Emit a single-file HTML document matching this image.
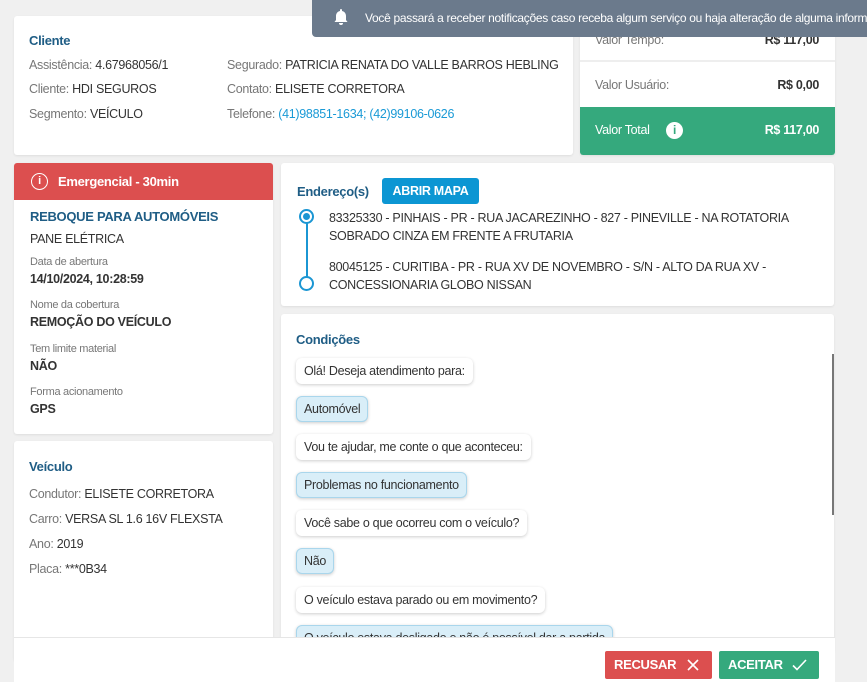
<!DOCTYPE html>
<html><head><meta charset="utf-8"><style>
*{box-sizing:border-box;margin:0;padding:0}
body{width:867px;height:682px;overflow:hidden;background:#f0f0f0;font-family:"Liberation Sans",sans-serif;font-size:12.5px;color:#333;position:relative;letter-spacing:-0.3px}
.card{position:absolute;background:#fff;border-radius:3px;box-shadow:0 1px 2px rgba(0,0,0,.08)}
.t{color:#1f5d85;font-weight:bold;font-size:13px}
.g{color:#777}
.abs{position:absolute;white-space:nowrap}
.b{font-weight:bold}
.bub{position:absolute;left:15px;padding:6px 8px;border-radius:6px;background:#fff;box-shadow:0 1px 3px rgba(0,0,0,.2);white-space:nowrap;font-size:12.5px}
.bub.a{background:#d9eef8;border:1px solid #a9d6ec;padding:5px 7px}
</style></head><body>

<div class="card" style="left:14px;top:16px;width:559px;height:139px">
<div class="abs t" style="left:15px;top:17px">Cliente</div>
<div class="abs" style="left:15px;top:42px"><span class="g">Assistência:</span> 4.67968056/1</div>
<div class="abs" style="left:15px;top:66px"><span class="g">Cliente:</span> HDI SEGUROS</div>
<div class="abs" style="left:15px;top:91px"><span class="g">Segmento:</span> VEÍCULO</div>
<div class="abs" style="left:213px;top:42px"><span class="g">Segurado:</span> PATRICIA RENATA DO VALLE BARROS HEBLING</div>
<div class="abs" style="left:213px;top:66px"><span class="g">Contato:</span> ELISETE CORRETORA</div>
<div class="abs" style="left:213px;top:91px"><span class="g">Telefone:</span> <span style="color:#1a9ad6">(41)98851-1634; (42)99106-0626</span></div>
</div>

<div class="card" style="left:580px;top:10px;width:255px;height:145px;overflow:hidden">
<div class="abs g" style="left:15px;top:23px">Valor Tempo:</div>
<div class="abs b" style="right:16px;top:23px">R$ 117,00</div>
<div style="position:absolute;left:0;right:0;top:50px;height:2px;background:#eee"></div>
<div class="abs g" style="left:15px;top:68px">Valor Usuário:</div>
<div class="abs b" style="right:16px;top:68px">R$ 0,00</div>
<div style="position:absolute;left:0;right:0;top:97px;height:48px;background:#35a97d;color:#fff">
<div class="abs" style="left:15px;top:16px">Valor Total</div>
<div class="abs" style="left:86px;top:15px;width:17px;height:17px;border-radius:50%;background:#fff;color:#35a97d;font-weight:bold;text-align:center;line-height:17px;font-size:12px">i</div>
<div class="abs b" style="right:16px;top:16px">R$ 117,00</div>
</div></div>

<div style="position:absolute;left:312px;top:0;width:555px;height:37px;background:#6b7a8c;border-radius:0 0 0 4px;color:#fff;overflow:hidden">
<svg style="position:absolute;left:22px;top:8px" width="14" height="17" viewBox="0 0 14 17"><path d="M7 1a1 1 0 0 1 1 1v1c2.5.5 4 2.5 4 5v4l1.5 2H.5L2 12V8c0-2.5 1.5-4.5 4-5V2a1 1 0 0 1 1-1z" fill="#fff"/><path d="M5 15h4a2 2 0 0 1-4 0z" fill="#fff"/></svg>
<div class="abs" style="left:53px;top:11px;font-size:12px;letter-spacing:-0.3px">Você passará a receber notificações caso receba algum serviço ou haja alteração de alguma informação</div>
</div>

<div class="card" style="left:14px;top:163px;width:259px;height:271px">
<div style="position:absolute;left:0;top:0;width:259px;height:37px;background:#dc4f4f;border-radius:3px 3px 0 0;color:#fff">
<div class="abs" style="left:17px;top:10px;width:17px;height:17px;border:1.5px solid #fff;border-radius:50%;text-align:center;font-size:11px;line-height:14px;font-weight:bold">i</div>
<div class="abs b" style="left:44px;top:11px;font-size:13px">Emergencial - 30min</div></div>
<div class="abs t" style="left:16px;top:46px;font-size:13px;font-weight:bold">REBOQUE PARA AUTOMÓVEIS</div>
<div class="abs" style="left:16px;top:69px">PANE ELÉTRICA</div>
<div class="abs g" style="left:16px;top:93px;font-size:11px">Data de abertura</div>
<div class="abs b" style="left:16px;top:109px">14/10/2024, 10:28:59</div>
<div class="abs g" style="left:16px;top:136px;font-size:11px">Nome da cobertura</div>
<div class="abs b" style="left:16px;top:152px">REMOÇÃO DO VEÍCULO</div>
<div class="abs g" style="left:16px;top:180px;font-size:11px">Tem limite material</div>
<div class="abs b" style="left:16px;top:196px">NÃO</div>
<div class="abs g" style="left:16px;top:223px;font-size:11px">Forma acionamento</div>
<div class="abs b" style="left:16px;top:239px">GPS</div>
</div>

<div class="card" style="left:14px;top:441px;width:259px;height:220px">
<div class="abs t" style="left:15px;top:18px">Veículo</div>
<div class="abs" style="left:15px;top:46px"><span class="g">Condutor:</span> ELISETE CORRETORA</div>
<div class="abs" style="left:15px;top:71px"><span class="g">Carro:</span> VERSA SL 1.6 16V FLEXSTA</div>
<div class="abs" style="left:15px;top:96px"><span class="g">Ano:</span> 2019</div>
<div class="abs" style="left:15px;top:121px"><span class="g">Placa:</span> ***0B34</div>
</div>

<div class="card" style="left:281px;top:163px;width:553px;height:143px">
<div class="abs t" style="left:16px;top:21px">Endereço(s)</div>
<div class="abs b" style="left:101px;top:15px;width:97px;height:26px;background:#0c96d3;color:#fff;border-radius:3px;text-align:center;line-height:26px;font-size:12.5px">ABRIR MAPA</div>
<div class="abs" style="left:18px;top:46px;width:15px;height:15px;border:2px solid #1b96d3;border-radius:50%"><div style="margin:2px;width:7px;height:7px;border-radius:50%;background:#1b96d3"></div></div>
<div class="abs" style="left:25px;top:60px;width:2px;height:54px;background:#1b96d3"></div>
<div class="abs" style="left:18px;top:113px;width:15px;height:15px;border:2px solid #1b96d3;border-radius:50%;background:#fff"></div>
<div class="abs" style="left:48px;top:46px;line-height:18px">83325330 - PINHAIS - PR - RUA JACAREZINHO - 827 - PINEVILLE - NA ROTATORIA<br>SOBRADO CINZA EM FRENTE A FRUTARIA</div>
<div class="abs" style="left:48px;top:95px;line-height:18px">80045125 - CURITIBA - PR - RUA XV DE NOVEMBRO - S/N - ALTO DA RUA XV -<br>CONCESSIONARIA GLOBO NISSAN</div>
</div>

<div class="card" style="left:281px;top:314px;width:553px;height:340px;overflow:hidden">
<div class="abs t" style="left:15px;top:18px">Condições</div>
<div class="bub" style="top:44px">Olá! Deseja atendimento para:</div>
<div class="bub a" style="top:82px">Automóvel</div>
<div class="bub" style="top:120px">Vou te ajudar, me conte o que aconteceu:</div>
<div class="bub a" style="top:158px">Problemas no funcionamento</div>
<div class="bub" style="top:196px">Você sabe o que ocorreu com o veículo?</div>
<div class="bub a" style="top:234px">Não</div>
<div class="bub" style="top:273px">O veículo estava parado ou em movimento?</div>
<div class="bub a" style="top:311px">O veículo estava desligado e não é possível dar a partida</div>
<div class="abs" style="left:551px;top:40px;width:2px;height:161px;background:#777"></div>
</div>

<div style="position:absolute;left:14px;top:637px;width:821px;height:45px;background:#fff;border-top:1px solid #e6e6e6">
<div class="abs b" style="left:591px;top:13px;width:107px;height:28px;background:#dc4f4f;color:#fff;border-radius:2px;line-height:28px;padding-left:9px;font-size:13px">RECUSAR
<svg style="position:absolute;left:82px;top:8px" width="12" height="12" viewBox="0 0 12 12"><path d="M1 1L11 11M11 1L1 11" stroke="#fff" stroke-width="1.6"/></svg></div>
<div class="abs b" style="left:705px;top:13px;width:100px;height:28px;background:#35a97d;color:#fff;border-radius:2px;line-height:28px;padding-left:9px;font-size:13px">ACEITAR
<svg style="position:absolute;left:73px;top:8px" width="15" height="12" viewBox="0 0 15 12"><path d="M1 6.5L5 10.5L14 1" stroke="#fff" stroke-width="1.6" fill="none"/></svg></div>
</div>
</body></html>
